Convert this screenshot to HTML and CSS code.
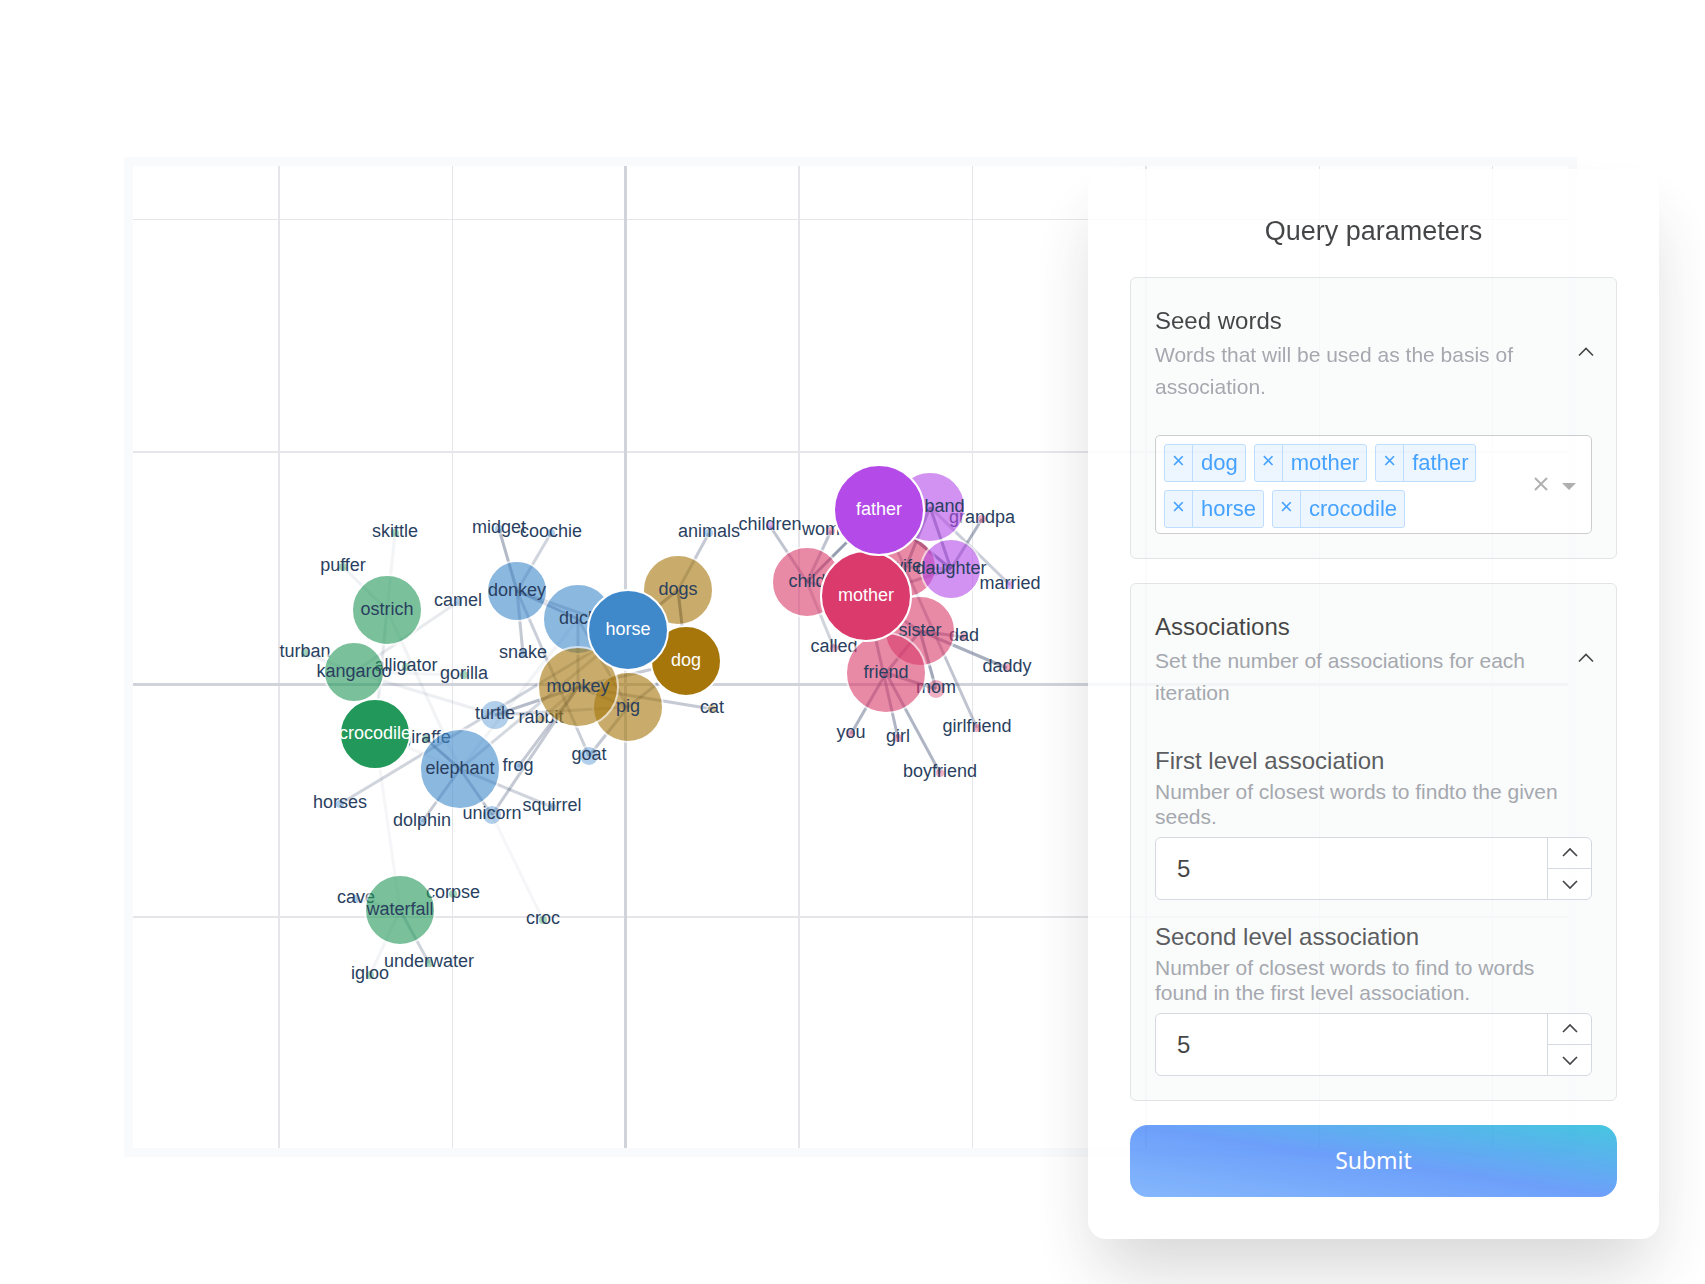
FILE: index.html
```html
<!DOCTYPE html>
<html lang="en">
<head>
  <meta charset="utf-8">
  <meta name="viewport" content="width=device-width, initial-scale=1">
  <title>Word associations</title>
  <link rel="stylesheet" href="styles.css">
</head>
<body>
  <main class="stage">
    <section class="graph" aria-label="Word association graph">
      <svg id="graph" class="graph-canvas" viewBox="133 166 1435 982" role="img" aria-label="Word associations"></svg>
    </section>

    <form class="panel">
      <h1 class="panel-title">Query parameters</h1>

      <section class="card">
        <button type="button" class="card-header" aria-expanded="true">
          <span class="card-heading">
            <span class="card-title">Seed words</span>
            <span class="card-text">Words that will be used as the basis of association.</span>
          </span>
          <svg class="chevron" viewBox="0 0 16 10"><path d="M3 7.500 10 0.500l7 7"/></svg>
        </button>
        <div class="select" role="group" aria-label="Seed words">
          <ul class="tags">
            <li class="tag"><button type="button" class="tag-remove" aria-label="Remove dog">×</button><span class="tag-label">dog</span></li>
            <li class="tag"><button type="button" class="tag-remove" aria-label="Remove mother">×</button><span class="tag-label">mother</span></li>
            <li class="tag"><button type="button" class="tag-remove" aria-label="Remove father">×</button><span class="tag-label">father</span></li>
            <li class="tag"><button type="button" class="tag-remove" aria-label="Remove horse">×</button><span class="tag-label">horse</span></li>
            <li class="tag"><button type="button" class="tag-remove" aria-label="Remove crocodile">×</button><span class="tag-label">crocodile</span></li>
          </ul>
          <button type="button" class="select-clear" aria-label="Clear all">
            <svg viewBox="0 0 14 14"><path d="M1 1l12 12M13 1 1 13"/></svg>
          </button>
          <button type="button" class="select-open" aria-label="Show options">
            <svg viewBox="0 0 14 8"><path d="M0 0h14L7 7z"/></svg>
          </button>
        </div>
      </section>

      <section class="card">
        <button type="button" class="card-header" aria-expanded="true">
          <span class="card-heading">
            <span class="card-title">Associations</span>
            <span class="card-text">Set the number of associations for each iteration</span>
          </span>
          <svg class="chevron" viewBox="0 0 16 10"><path d="M3 7.500 10 0.500l7 7"/></svg>
        </button>
        <div class="fields">
          <div class="field">
            <label class="field-label" for="first-level">First level association</label>
            <p class="field-text">Number of closest words to findto the given seeds.</p>
            <div class="number">
              <input class="number-input" id="first-level" type="number" value="5">
              <div class="stepper">
                <button type="button" class="step" aria-label="Increase"><svg class="chevron" viewBox="0 0 16 10"><path d="M1 8 8 1l7 7"/></svg></button>
                <button type="button" class="step" aria-label="Decrease"><svg class="chevron" viewBox="0 0 16 10"><path d="M1 2l7 7 7-7"/></svg></button>
              </div>
            </div>
          </div>
          <div class="field">
            <label class="field-label" for="second-level">Second level association</label>
            <p class="field-text">Number of closest words to find to words found in the first level association.</p>
            <div class="number">
              <input class="number-input" id="second-level" type="number" value="5">
              <div class="stepper">
                <button type="button" class="step" aria-label="Increase"><svg class="chevron" viewBox="0 0 16 10"><path d="M1 8 8 1l7 7"/></svg></button>
                <button type="button" class="step" aria-label="Decrease"><svg class="chevron" viewBox="0 0 16 10"><path d="M1 2l7 7 7-7"/></svg></button>
              </div>
            </div>
          </div>
        </div>
      </section>

      <button type="submit" class="submit">Submit</button>
    </form>
  </main>
  <script src="graph.js"></script>
</body>
</html>
```
FILE: styles.css
```css
* {
  box-sizing: border-box;
}

body {
  margin: 0;
  background: #fff;
  color: #1e1f21;
  font-family: "Liberation Sans", Arial, sans-serif;
}

button,
input {
  font: inherit;
  color: inherit;
}

button {
  padding: 0;
  border: 0;
  background: none;
  cursor: pointer;
}

/* The panel shares the graph's grid cell and floats over its right side. */
.stage {
  display: grid;
  grid-template-columns: minmax(0, 1fr);
  align-items: start;
  min-height: 100vh;
  padding-top: 157px;
}

.graph {
  grid-area: 1 / 1;
  margin: 0 128px 0 124px;
  border: 9px solid #f8fafc;
}

.graph-canvas {
  display: block;
  width: 100%;
  height: auto;
}

.grid-line {
  stroke: #e5e5ea;
}

.axis {
  stroke: #d1d3db;
  stroke-width: 3;
}

.edge {
  stroke: #2f4066;
  stroke-width: 3;
}

.node {
  stroke: #fff;
  stroke-width: 2;
}

.node-label {
  fill: #2a3f5f;
  font-size: 18px;
  text-anchor: middle;
}

.node-label.seed {
  fill: #fff;
}

.green { fill: #22995a; }
.blue { fill: #3f89cb; }
.brown { fill: #a6760b; }
.pink { fill: #da3b6c; }
.purple { fill: #b44be8; }

.panel {
  grid-area: 1 / 1;
  justify-self: end;
  display: flex;
  flex-direction: column;
  gap: 24px;
  width: 571px;
  max-width: 100%;
  margin: 12px 46px 40px 0;
  padding: 42px;
  border-radius: 18px;
  background: #fff;
  box-shadow: 0 40px 70px -10px rgba(0, 0, 0, 0.2);
  opacity: 0.83;
}

.panel-title {
  margin: 0 0 2px;
  font-size: 27px;
  font-weight: 400;
  line-height: 40px;
  text-align: center;
}

.card {
  padding: 24px;
  border: 1px solid #dbe0e2;
  border-radius: 6px;
  background: #f9fbfa;
}

.card-header {
  display: flex;
  align-items: center;
  justify-content: space-between;
  width: 100%;
  text-align: left;
}

.card-heading {
  max-width: 390px;
}

.card-title,
.card-text {
  display: block;
}

.card-title {
  font-size: 24px;
  line-height: 37px;
}

.card-text {
  font-size: 21px;
  line-height: 32px;
  color: #93969f;
}

.chevron {
  flex: none;
  width: 16px;
  height: 10px;
  overflow: visible;
  fill: none;
  stroke: #1e1f21;
  stroke-width: 1.6;
}

.select {
  display: flex;
  align-items: center;
  margin-top: 32px;
  padding: 8px 15px 5px 8px;
  border: 1px solid #c4c4c4;
  border-radius: 5px;
  background: #fff;
}

.tags {
  flex: 1;
  display: flex;
  flex-wrap: wrap;
  gap: 8px;
  margin: 0;
  padding: 0;
  list-style: none;
}

.tag {
  display: flex;
  height: 38px;
  border: 1px solid #b0d7ff;
  border-radius: 3px;
  background: #eaf4ff;
  color: #1f8fff;
  font-size: 22px;
}

.tag-remove {
  width: 28px;
  padding-bottom: 4px;
  border-right: 1px solid #b0d7ff;
  line-height: 28px;
}

.tag-label {
  padding: 0 7px 0 8px;
  line-height: 36px;
}

.select-clear,
.select-open {
  display: flex;
  margin-bottom: 4px;
  color: #a0a0a0;
}

.select-clear svg {
  width: 14px;
  height: 14px;
  stroke: currentColor;
  stroke-width: 2;
}

.select-open {
  margin-left: 14px;
  padding-top: 5px;
}

.select-open svg {
  width: 14px;
  height: 8px;
  fill: currentColor;
}

.fields {
  display: flex;
  flex-direction: column;
  gap: 21px;
  margin-top: 36px;
}

.field-label {
  display: block;
  margin-bottom: 2px;
  font-size: 24px;
  line-height: 32px;
  color: #3a3c40;
}

.field-text {
  margin: 0 0 8px;
  font-size: 21px;
  line-height: 25px;
  color: #93969f;
}

.number {
  display: flex;
  height: 63px;
  border: 1px solid #cdd2da;
  border-radius: 6px;
  background: #fff;
  overflow: hidden;
}

.number-input {
  flex: 1;
  min-width: 0;
  padding: 0 21px;
  border: 0;
  background: none;
  font-size: 24px;
  appearance: textfield;
}

.number-input::-webkit-inner-spin-button {
  appearance: none;
}

.stepper {
  display: grid;
  grid-template-rows: 30px 1fr;
  width: 44px;
  border-left: 1px solid #cdd2da;
}

.step {
  display: flex;
  align-items: center;
  justify-content: center;
}

.step + .step {
  border-top: 1px solid #cdd2da;
}

.submit {
  height: 72px;
  padding-bottom: 2px;
  border-radius: 18px;
  background: linear-gradient(to top right, #6ca9fc, #4f8cf9, #20bada);
  color: #fff;
  font-family: "Noto Sans", sans-serif;
  font-size: 23px;
}
```
FILE: graph.js
```js
const SVG_NS = "http://www.w3.org/2000/svg";
const canvas = document.getElementById("graph");

// Grid lines: [position, width]
const columns = [[279, 2], [452.5, 1], [799, 2], [972.5, 1], [1146, 2], [1319.5, 1], [1492.5, 1]];
const rows = [[219.5, 1], [452, 2], [917, 2]];

// Words, back to front: name, x, y, radius, colour, level (2 = leaf, 1 = first level, 0 = seed)
const words = [
  ["skittle", 395, 533, 5, "green", 2],
  ["puffer", 343, 567, 5, "green", 2],
  ["camel", 458, 602, 5, "blue", 2],
  ["turban", 305, 653, 5, "green", 2],
  ["alligator", 406, 667, 5, "green", 2],
  ["gorilla", 464, 675, 5, "green", 2],
  ["giraffe", 426, 739, 5, "green", 2],
  ["turtle", 495, 715, 15, "blue", 2],
  ["rabbit", 541, 719, 5, "brown", 2],
  ["frog", 518, 767, 5, "blue", 2],
  ["squirrel", 552, 807, 5, "blue", 2],
  ["unicorn", 492, 815, 10, "blue", 2],
  ["dolphin", 422, 822, 5, "blue", 2],
  ["horses", 340, 804, 5, "blue", 2],
  ["cave", 356, 899, 5, "blue", 2],
  ["corpse", 453, 894, 5, "green", 2],
  ["croc", 543, 920, 5, "green", 2],
  ["underwater", 429, 963, 5, "green", 2],
  ["igloo", 370, 975, 5, "green", 2],
  ["midget", 499, 529, 5, "blue", 2],
  ["coochie", 551, 533, 5, "blue", 2],
  ["snake", 523, 654, 5, "blue", 2],
  ["goat", 589, 756, 10, "blue", 2],
  ["animals", 709, 533, 5, "blue", 2],
  ["cat", 712, 709, 5, "brown", 2],
  ["children", 770, 526, 5, "purple", 2],
  ["woman", 831, 531, 5, "pink", 2],
  ["grandpa", 982, 519, 5, "pink", 2],
  ["married", 1010, 585, 5, "purple", 2],
  ["dad", 964, 637, 5, "pink", 2],
  ["daddy", 1007, 668, 5, "pink", 2],
  ["called", 834, 648, 5, "pink", 2],
  ["mom", 936, 689, 10, "pink", 2],
  ["you", 851, 734, 5, "pink", 2],
  ["girl", 898, 738, 5, "pink", 2],
  ["girlfriend", 977, 728, 5, "pink", 2],
  ["boyfriend", 940, 773, 5, "pink", 2],
  ["ostrich", 387, 610, 35, "green", 1],
  ["kangaroo", 354, 672, 30, "green", 1],
  ["waterfall", 400, 910, 35, "green", 1],
  ["donkey", 517, 591, 30, "blue", 1],
  ["duck", 578, 619, 35, "blue", 1],
  ["elephant", 460, 769, 40, "blue", 1],
  ["dogs", 678, 590, 35, "brown", 1],
  ["pig", 628, 707, 35, "brown", 1],
  ["monkey", 578, 687, 40, "brown", 1],
  ["child", 807, 582, 35, "pink", 1],
  ["wife", 906, 567, 30, "pink", 1],
  ["sister", 920, 631, 35, "pink", 1],
  ["friend", 886, 673, 40, "pink", 1],
  ["husband", 930, 507, 35, "purple", 1],
  ["daughter", 951, 569, 30, "purple", 1],
  ["crocodile", 375, 734, 35, "green", 0],
  ["dog", 686, 661, 35, "brown", 0],
  ["horse", 628, 630, 40, "blue", 0],
  ["mother", 866, 596, 45, "pink", 0],
  ["father", 879, 510, 45, "purple", 0],
];

// Associations: from, to, strength
const edges = [
  ["skittle", "ostrich", 0.05], ["puffer", "ostrich", 0.07], ["ostrich", "elephant", 0.06],
  ["ostrich", "crocodile", 0.11], ["kangaroo", "camel", 0.1], ["kangaroo", "turban", 0.08],
  ["kangaroo", "gorilla", 0.05], ["kangaroo", "turtle", 0.08], ["crocodile", "waterfall", 0.04],
  ["crocodile", "elephant", 0.04], ["giraffe", "elephant", 0.4], ["elephant", "horse", 0.2],
  ["horses", "horse", 0.22], ["turtle", "monkey", 0.35], ["turtle", "pig", 0.2],
  ["unicorn", "monkey", 0.28], ["frog", "monkey", 0.28], ["unicorn", "elephant", 0.3],
  ["elephant", "squirrel", 0.22], ["elephant", "dolphin", 0.28], ["unicorn", "croc", 0.04],
  ["goat", "pig", 0.28], ["goat", "donkey", 0.25], ["monkey", "duck", 0.22],
  ["donkey", "duck", 0.35], ["donkey", "horse", 0.25], ["donkey", "midget", 0.36],
  ["donkey", "coochie", 0.22], ["donkey", "snake", 0.28], ["duck", "pig", 0.22],
  ["monkey", "cat", 0.28], ["elephant", "duck", 0.05], ["monkey", "dog", 0.28],
  ["monkey", "pig", 0.28], ["pig", "dog", 0.28], ["dogs", "dog", 0.5],
  ["dogs", "horse", 0.4], ["dogs", "animals", 0.28], ["rabbit", "monkey", 0.2],
  ["waterfall", "underwater", 0.22], ["waterfall", "igloo", 0.05], ["waterfall", "cave", 0.08],
  ["waterfall", "corpse", 0.04], ["children", "child", 0.3], ["woman", "child", 0.3],
  ["child", "father", 0.5], ["child", "mother", 0.35], ["called", "child", 0.22],
  ["husband", "wife", 0.45], ["husband", "daughter", 0.5], ["husband", "married", 0.25],
  ["grandpa", "daughter", 0.4], ["father", "daughter", 0.6], ["wife", "daughter", 0.3],
  ["mother", "daughter", 0.35], ["father", "girlfriend", 0.3], ["sister", "mom", 0.45],
  ["sister", "daddy", 0.42], ["sister", "dad", 0.4], ["sister", "friend", 0.4],
  ["sister", "mother", 0.35], ["friend", "mom", 0.4], ["friend", "you", 0.38],
  ["mother", "girl", 0.38], ["friend", "boyfriend", 0.38],
];

const opacityByLevel = [1, 0.6, 0.4];
const places = new Map(words.map(([name, x, y]) => [name, { x, y }]));

function draw(tag, attributes, text) {
  const element = document.createElementNS(SVG_NS, tag);
  for (const [key, value] of Object.entries(attributes)) {
    element.setAttribute(key, value);
  }
  if (text) element.textContent = text;
  canvas.append(element);
}

for (const [x, width] of columns) {
  draw("line", { class: "grid-line", x1: x, x2: x, y1: 166, y2: 1148, "stroke-width": width });
}
for (const [y, width] of rows) {
  draw("line", { class: "grid-line", x1: 133, x2: 1568, y1: y, y2: y, "stroke-width": width });
}
draw("line", { class: "axis", x1: 625.5, x2: 625.5, y1: 166, y2: 1148 });
draw("line", { class: "axis", x1: 133, x2: 1568, y1: 684.5, y2: 684.5 });

for (const [from, to, strength] of edges) {
  const a = places.get(from);
  const b = places.get(to);
  draw("line", { class: "edge", x1: a.x, y1: a.y, x2: b.x, y2: b.y, opacity: strength });
}

for (const [name, x, y, r, colour, level] of words) {
  const baseline = y + (level === 2 ? 4 : 5);
  draw("circle", { class: `node ${colour}`, cx: x, cy: y, r, opacity: opacityByLevel[level] });
  draw("text", { class: level === 0 ? "node-label seed" : "node-label", x, y: baseline }, name);
}
```
